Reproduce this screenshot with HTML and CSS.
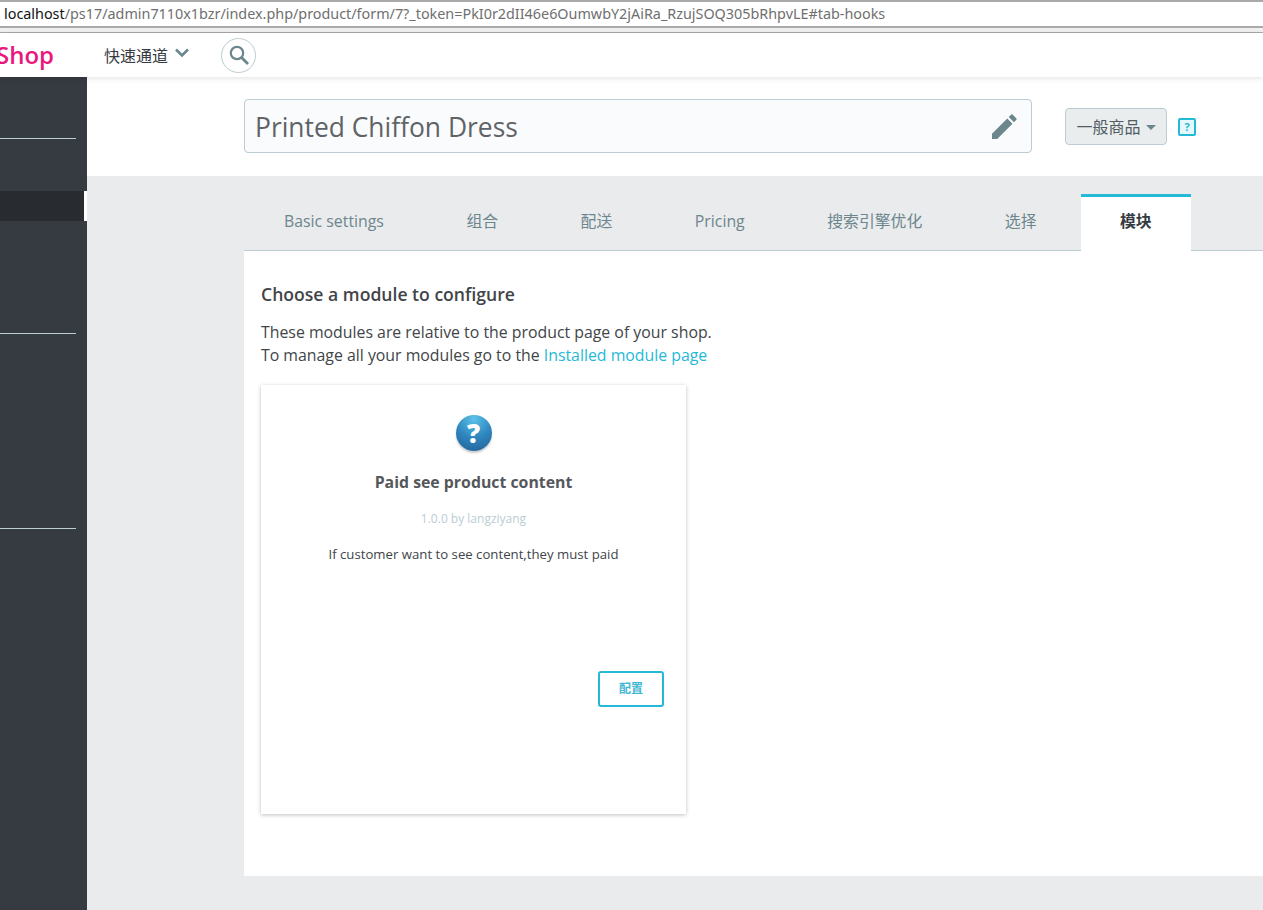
FILE: index.html
```html
<!DOCTYPE html>
<html lang="en">
<head>
  <meta charset="UTF-8" />
  <meta name="viewport" content="width=device-width, initial-scale=1.0" />
  <title>Printed Chiffon Dress</title>
  <link rel="stylesheet" href="styles.css">
</head>
<body>
  <div class="url-bar">
    <span class="url-host">localhost</span><span class="url-path">/ps17/admin7110x1bzr/index.php/product/form/7?_token=PkI0r2dII46e6OumwbY2jAiRa_RzujSOQ305bRhpvLE#tab-hooks</span>
  </div>
  <div class="url-gap"></div>

  <header class="topbar">
    <span class="logo">Shop</span>
    <a class="quick-access">快速通道
      <svg class="chevron" width="16" height="10" viewBox="0 0 16 10"><path d="M2 1.5 L8 7.5 L14 1.5" fill="none" stroke="#6c868e" stroke-width="2.6"/></svg>
    </a>
    <button class="search-btn" aria-label="Search">
      <svg width="22" height="22" viewBox="0 0 22 22"><circle cx="9" cy="9" r="6.2" fill="none" stroke="#6c868e" stroke-width="2.2"/><path d="M13.5 13.5 L20 20" stroke="#6c868e" stroke-width="2.8"/></svg>
    </button>
  </header>

  <div class="layout">
    <nav class="sidebar">
      <div class="side-group">
        <div class="side-active"></div>
      </div>
      <div class="side-group"></div>
      <div class="side-group"></div>
    </nav>

    <main class="content">
      <div class="product-head">
        <div class="product-title">
          <span>Printed Chiffon Dress</span>
          <svg width="25" height="25" viewBox="0 0 26 26"><path d="M0 26 V20.6 L15.9 4.7 L21.3 10.1 L5.4 26 Z M17.4 3.2 L20 0.6 Q20.7 0 21.4 0.6 L25.4 4.6 Q26 5.3 25.4 6 L22.8 8.6 Z" fill="#6c868e"/></svg>
        </div>
        <button class="type-btn">一般商品<i class="caret"></i></button>
        <span class="help-icon">?</span>
      </div>

      <div class="product-body">
        <ul class="tabs">
          <li>Basic settings</li>
          <li>组合</li>
          <li>配送</li>
          <li>Pricing</li>
          <li>搜索引擎优化</li>
          <li>选择</li>
          <li class="tab-active">模块</li>
        </ul>

        <section class="panel">
          <h2>Choose a module to configure</h2>
          <p class="intro">These modules are relative to the product page of your shop.<br>To manage all your modules go to the <a>Installed module page</a></p>

          <div class="module-card">
            <div class="module-icon">?</div>
            <h3>Paid see product content</h3>
            <div class="module-version">1.0.0 by langziyang</div>
            <p class="module-desc">If customer want to see content,they must paid</p>
            <div class="module-actions"><button class="config-btn">配置</button></div>
          </div>
        </section>
      </div>
    </main>
  </div>
</body>
</html>
```

FILE: styles.css
```css
* {
  margin: 0;
  padding: 0;
  box-sizing: border-box;
}
html, body {
  height: 910px;
  overflow: hidden;
}
body {
  font-family: 'Open Sans', 'Noto Sans CJK SC', sans-serif;
  background: #fff;
  color: #363a41;
}
button {
  font-family: inherit;
}
.url-bar {
  height: 28px;
  border-top: 2px solid #a9a9a9;
  border-bottom: 2px solid #a9a9a9;
  padding-left: 4px;
  font-family: 'Noto Sans', sans-serif;
  font-size: 14.37px;
  line-height: 23px;
  white-space: nowrap;
  overflow: hidden;
}
.url-host {
  color: #111;
}
.url-path {
  color: #6f6f6f;
}
.url-gap {
  height: 5px;
  background: #f1f1f1;
  border-bottom: 1px solid #a9a9a9;
}
.topbar {
  height: 44px;
  display: flex;
  align-items: center;
  background: #fff;
  box-shadow: 0 1px 6px rgba(0, 0, 0, 0.12);
  position: relative;
}
.logo {
  margin-left: -4px;
  width: 108px;
  color: #e9177d;
  font-size: 24px;
  font-weight: 600;
  line-height: 44px;
}
.quick-access {
  font-size: 16px;
  color: #363a41;
  width: 117px;
  display: flex;
  align-items: center;
  gap: 6px;
}
.chevron {
  margin-top: -4px;
}
.search-btn {
  width: 35px;
  height: 35px;
  border: 1px solid #bbcdd2;
  border-radius: 50%;
  background: #fff;
  display: flex;
  align-items: center;
  justify-content: center;
}
.layout {
  display: flex;
  height: 833px;
}
.sidebar {
  width: 87px;
  background: #363a41;
  padding-top: 61px;
  flex-shrink: 0;
}
.side-group {
  height: 195px;
  width: 87px;
  padding-top: 53px;
  background: linear-gradient(#bbcdd2, #bbcdd2) no-repeat 0 0 / 76px 1px;
}
.side-active {
  height: 30px;
  background: #282b30;
  border-right: 3px solid #fff;
}
.content {
  flex: 1;
  min-width: 0;
  display: flex;
  flex-direction: column;
}
.product-head {
  height: 99px;
  padding: 22px 0 0 157px;
  display: flex;
  align-items: flex-start;
}
.product-title {
  width: 788px;
  height: 54px;
  border: 1px solid #bbcdd2;
  border-radius: 4px;
  background: #fafbfc;
  padding: 1px 14px 0 10px;
  display: flex;
  align-items: center;
  justify-content: space-between;
  font-size: 26.4px;
  color: #5f6367;
}
.type-btn {
  margin: 9px 0 0 33px;
  width: 102px;
  height: 37px;
  border: 1px solid #bbcdd2;
  border-radius: 4px;
  background: #eaedee;
  color: #4f5c63;
  font-size: 16px;
  line-height: 20px;
  display: flex;
  align-items: center;
  justify-content: center;
  gap: 5px;
}
.caret {
  width: 0;
  height: 0;
  border-left: 5.5px solid transparent;
  border-right: 5.5px solid transparent;
  border-top: 5px solid #6c868e;
  margin-top: 1px;
}
.help-icon {
  margin: 19px 0 0 11px;
  width: 18px;
  height: 18px;
  border: 2px solid #25b9d7;
  border-radius: 2px;
  background: #e6f8fb;
  color: #25b9d7;
  font-size: 11px;
  font-weight: 700;
  line-height: 14px;
  text-align: center;
}
.product-body {
  flex: 1;
  background: #eaebec;
  padding: 18px 0 0 157px;
}
.tabs {
  list-style: none;
  display: flex;
  gap: 4.5px;
  height: 57px;
  padding-left: 1px;
  border-bottom: 1px solid #bbcdd2;
}
.tabs li {
  padding: 0 39px;
  height: 57px;
  line-height: 48px;
  font-size: 15.85px;
  color: #6c868e;
  border-top: 3px solid transparent;
  white-space: nowrap;
}
.tabs .tab-active {
  margin-left: 1px;
  background: #fff;
  border-top-color: #25b9d7;
  color: #363a41;
  font-weight: 600;
}
.panel {
  height: 625px;
  background: #fff;
  padding: 31px 17px 0;
}
.panel h2 {
  font-size: 17.6px;
  font-weight: 600;
  line-height: 24px;
  color: #414549;
}
.intro {
  margin-top: 15px;
  font-size: 15.85px;
  line-height: 23px;
  color: #414549;
}
.intro a {
  color: #25b9d7;
}
.module-card {
  margin-top: 18px;
  width: 425px;
  height: 429px;
  background: #fff;
  box-shadow: 0 1px 4px rgba(0, 0, 0, 0.25);
  padding-top: 30px;
  text-align: center;
}
.module-icon {
  width: 36px;
  height: 36px;
  margin: 0 auto;
  border-radius: 50%;
  background: radial-gradient(circle at 50% 10%, #5cc3ea 0%, #2f87bf 50%, #235f95 100%);
  box-shadow: 0 2px 2px rgba(0, 0, 0, 0.2);
  color: #fff;
  font-size: 26px;
  font-weight: 800;
  line-height: 36px;
}
.module-card h3 {
  margin-top: 20px;
  font-size: 15.85px;
  font-weight: 700;
  line-height: 22px;
  color: #54585c;
}
.module-version {
  margin-top: 17px;
  font-size: 12px;
  line-height: 18px;
  color: #bbcdd2;
}
.module-desc {
  margin-top: 17px;
  font-size: 13.2px;
  line-height: 18px;
  color: #414549;
}
.module-actions {
  display: flex;
  justify-content: flex-end;
  margin-top: 108px;
  padding-right: 22px;
}
.config-btn {
  width: 66px;
  height: 36px;
  border: 2px solid #25b9d7;
  border-radius: 3px;
  background: #fff;
  color: #3fb6d3;
  font-size: 12px;
  font-weight: 600;
  padding-bottom: 2px;
}
```
